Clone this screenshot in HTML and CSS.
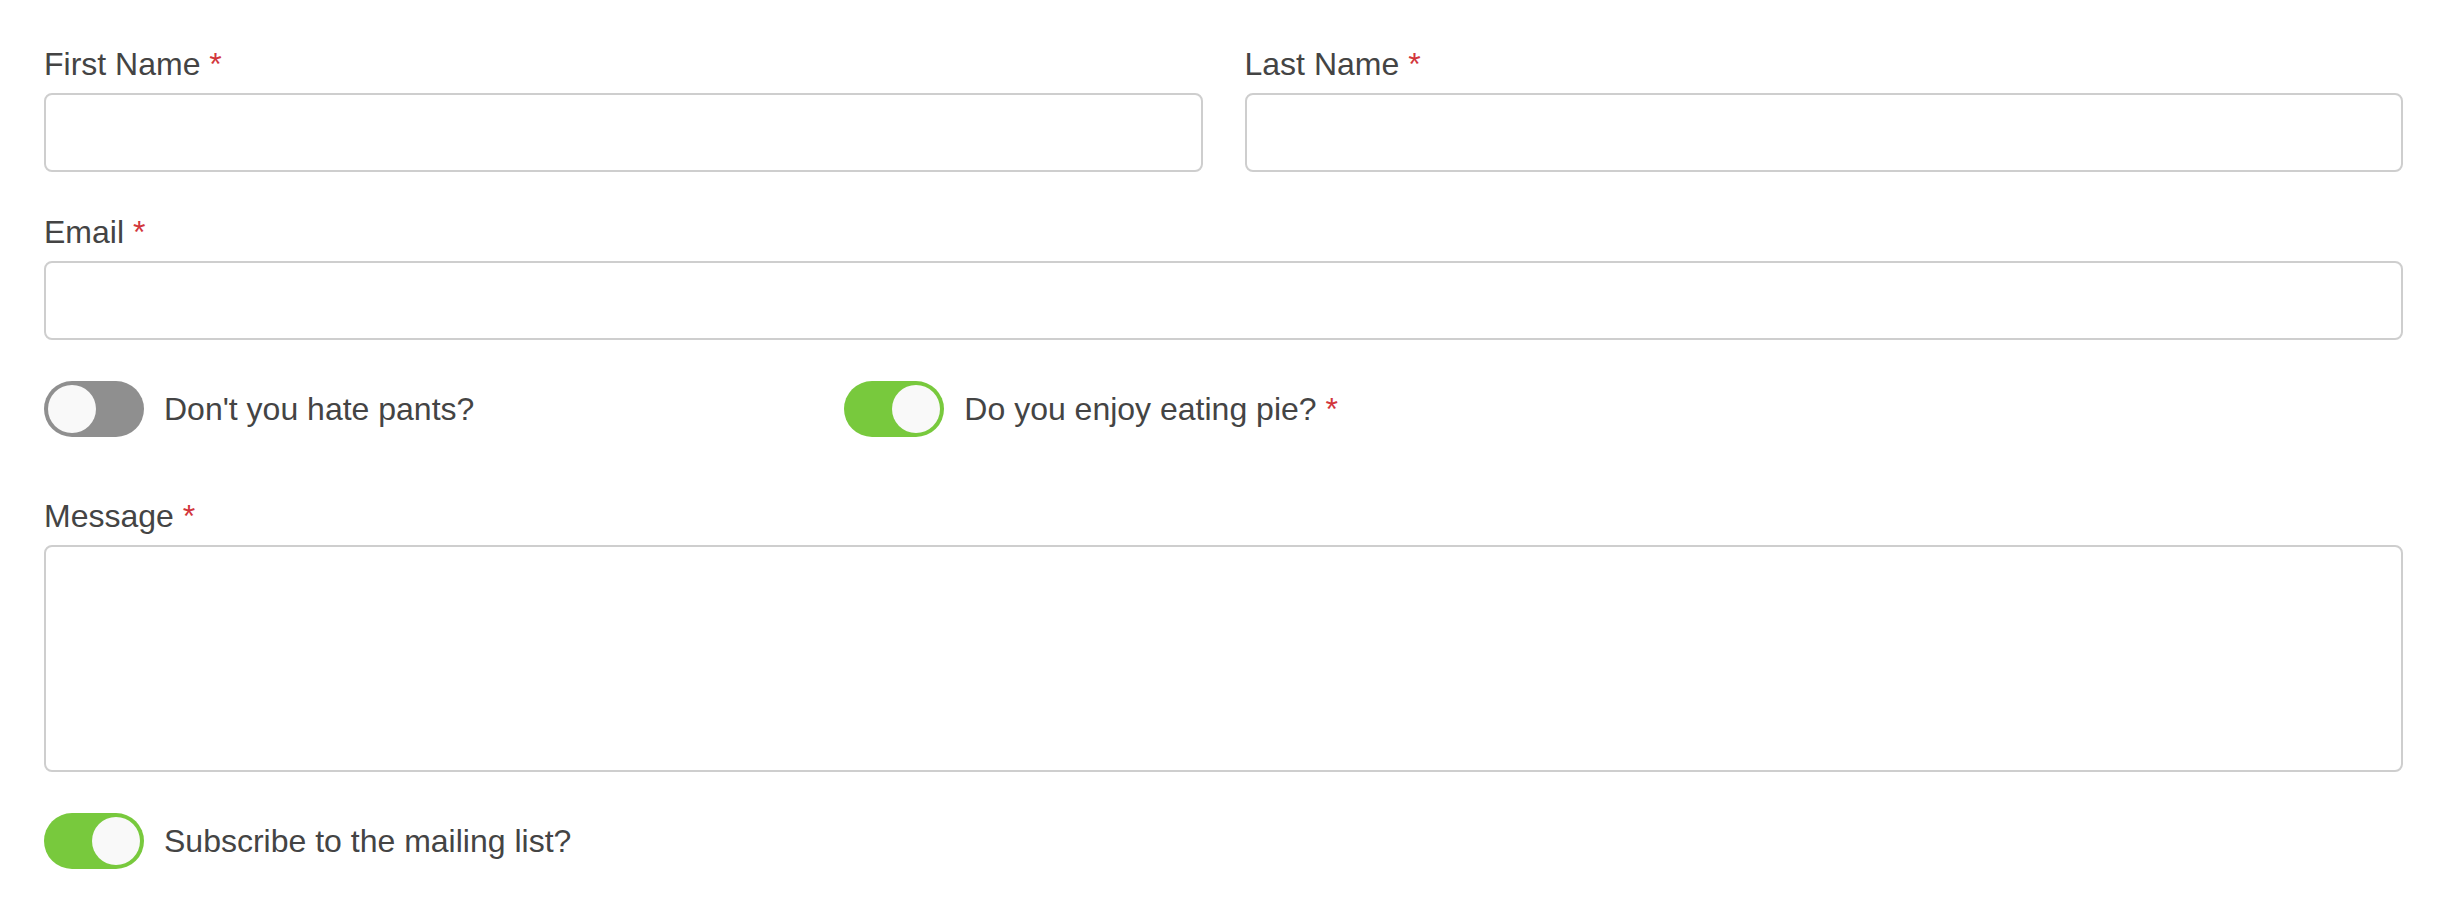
FILE: index.html
```html
<!DOCTYPE html>
<html lang="en">
<head>
<meta charset="utf-8">
<title>Form</title>
<link rel="stylesheet" href="styles.css">
</head>
<body>
<form class="form">
  <div class="row two">
    <div class="field">
      <label class="label">First Name <span class="req">*</span></label>
      <input class="input" type="text">
    </div>
    <div class="field">
      <label class="label">Last Name <span class="req">*</span></label>
      <input class="input" type="text">
    </div>
  </div>
  <div class="field group">
    <label class="label">Email <span class="req">*</span></label>
    <input class="input" type="email">
  </div>
  <div class="row three toggles">
    <div class="switch-field">
      <span class="switch off"><span class="knob"></span></span>
      <span class="switch-label">Don't you hate pants?</span>
    </div>
    <div class="switch-field">
      <span class="switch on"><span class="knob"></span></span>
      <span class="switch-label">Do you enjoy eating pie? <span class="req">*</span></span>
    </div>
  </div>
  <div class="field message">
    <label class="label">Message <span class="req">*</span></label>
    <textarea class="input area"></textarea>
  </div>
  <div class="switch-field last">
    <span class="switch on"><span class="knob"></span></span>
    <span class="switch-label">Subscribe to the mailing list?</span>
  </div>
</form>
</body>
</html>
```
FILE: styles.css
```css
* { box-sizing: border-box; }
html, body { margin: 0; background: #ffffff; }
body {
  font-family: "Liberation Sans", Arial, Helvetica, sans-serif;
  font-size: 32px;
  color: #444444;
}
.form {
  padding: 44px 43px 40px 44px;
}
.row { display: grid; gap: 42px; }
.row.two { grid-template-columns: 1fr 1fr; }
.row.three { grid-template-columns: 1fr 1fr 1fr; }
.field { display: flex; flex-direction: column; }
.group { margin-top: 40px; }
.label {
  line-height: 40px;
  margin-bottom: 9px;
  color: #444444;
}
.req { color: #d2363c; }
.input {
  display: block;
  width: 100%;
  height: 79px;
  border: 2px solid #cecece;
  border-radius: 8px;
  background: #ffffff;
  font: inherit;
  margin: 0;
  padding: 0 20px;
  outline: none;
}
.area { height: 227px; resize: none; }
.toggles { margin-top: 41px; }
.message { margin-top: 59px; }
.last { margin-top: 41px; }
.switch-field {
  display: flex;
  align-items: center;
  gap: 20px;
}
.switch {
  flex: none;
  display: flex;
  align-items: center;
  width: 100px;
  height: 56px;
  padding: 4px;
  border-radius: 28px;
}
.switch.off { background: #8f8f8f; justify-content: flex-start; }
.switch.on { background: #78c93d; justify-content: flex-end; }
.knob {
  width: 48px;
  height: 48px;
  border-radius: 50%;
  background: #f9f9f9;
}
.switch-label { line-height: 40px; }
```
